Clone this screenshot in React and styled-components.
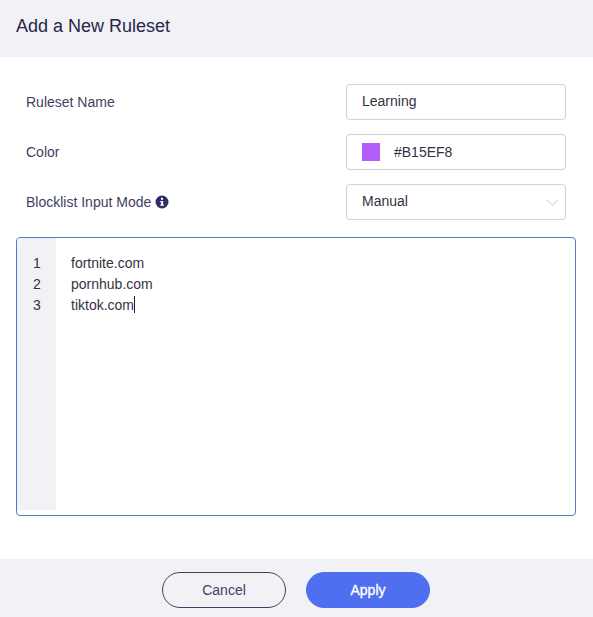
import React from "react";
import styled, { createGlobalStyle } from "styled-components";

const GlobalStyle = createGlobalStyle`
  html, body {
    margin: 0;
    padding: 0;
    background: #fff;
    font-family: "Liberation Sans", Arial, sans-serif;
  }
  * {
    box-sizing: border-box;
  }
`;

const Dialog = styled.div`
  width: 593px;
  height: 617px;
  display: flex;
  flex-direction: column;
  background: #fff;
`;

const Header = styled.header`
  height: 57px;
  flex: none;
  display: flex;
  align-items: center;
  padding: 0 16px 5px;
  background: #f1f1f6;
`;

const Title = styled.h1`
  margin: 0;
  font-size: 18px;
  font-weight: normal;
  color: #27274a;
`;

const Body = styled.main`
  flex: 1;
  padding: 26px 17px 0 16px;
`;

const Form = styled.div`
  display: flex;
  flex-direction: column;
  gap: 12px;
  padding: 0 10px;
`;

const Row = styled.div`
  display: flex;
  align-items: center;
  justify-content: space-between;
  height: 38px;
`;

const Label = styled.label`
  display: flex;
  align-items: center;
  gap: 4px;
  font-size: 14px;
  color: #3f3f63;
`;

const Field = styled.div`
  width: 220px;
  height: 36px;
  display: flex;
  align-items: center;
  gap: 14px;
  padding: 0 15px ${({ $swatch }) => ($swatch ? "1px" : "3px")};
  border: 1px solid #d0d0d6;
  border-radius: 4px;
  background: #fff;
  font-size: 14px;
  color: #33333f;
`;

const Swatch = styled.span`
  width: 18px;
  height: 18px;
  flex: none;
  margin-top: 1px;
  background: ${({ $color }) => $color};
`;

const Chevron = styled.svg`
  margin: 4px -9px 0 auto;
`;

const Editor = styled.div`
  height: 279px;
  margin-top: 16px;
  display: flex;
  padding-bottom: 5px;
  border: 1px solid #5c74c4;
  border-radius: 4px;
  background: #fff;
  overflow: hidden;
  font-size: 14px;
  line-height: 21px;
  color: #33333f;
`;

const Gutter = styled.div`
  width: 39px;
  flex: none;
  padding: 15px 0 0 16px;
  background: #f1f1f6;
`;

const Lines = styled.div`
  padding: 15px 0 0 15px;
`;

const Caret = styled.span`
  display: inline-block;
  width: 1px;
  height: 17px;
  vertical-align: -3px;
  background: #222;
`;

const Footer = styled.footer`
  height: 58px;
  flex: none;
  display: flex;
  justify-content: center;
  align-items: center;
  gap: 20px;
  padding: 4px 1px 0 0;
  background: #f1f1f6;
`;

const Button = styled.button`
  width: 124px;
  height: 36px;
  padding: 0;
  border-radius: 18px;
  border: 1px solid ${({ $primary }) => ($primary ? "#4f6ff0" : "#3f3f63")};
  background: ${({ $primary }) => ($primary ? "#4f6ff0" : "transparent")};
  color: ${({ $primary }) => ($primary ? "#fff" : "#3f3f63")};
  font-family: inherit;
  font-size: 14px;
  -webkit-text-stroke: ${({ $primary }) => ($primary ? "0.35px #fff" : "0")};
`;

const InfoIcon = () => (
  <svg width="14" height="14" viewBox="0 0 14 14" aria-hidden="true">
    <circle cx="7" cy="7" r="6.5" fill="#2f2f66" />
    <rect x="6" y="2.8" width="2" height="2" fill="#fff" />
    <path d="M5.3 6h2.8v3.6h.8v1.2H5.3V9.600h.9V7.200h-.9z" fill="#fff" />
  </svg>
);

const App = () => (
  <Dialog>
    <GlobalStyle />
    <Header>
      <Title>Add a New Ruleset</Title>
    </Header>
    <Body>
      <Form>
        <Row>
          <Label>Ruleset Name</Label>
          <Field>Learning</Field>
        </Row>
        <Row>
          <Label>Color</Label>
          <Field $swatch>
            <Swatch $color="#b15ef8" />
            #B15EF8
          </Field>
        </Row>
        <Row>
          <Label>
            Blocklist Input Mode
            <InfoIcon />
          </Label>
          <Field>
            Manual
            <Chevron width="13" height="7" viewBox="0 0 13 7" fill="none" stroke="#c4c4cc" strokeWidth="1">
              <path d="M1 1l5.500 5 5.500-5" />
            </Chevron>
          </Field>
        </Row>
      </Form>
      <Editor>
        <Gutter>
          <div>1</div>
          <div>2</div>
          <div>3</div>
        </Gutter>
        <Lines>
          <div>fortnite.com</div>
          <div>pornhub.com</div>
          <div>
            tiktok.com
            <Caret />
          </div>
        </Lines>
      </Editor>
    </Body>
    <Footer>
      <Button>Cancel</Button>
      <Button $primary>Apply</Button>
    </Footer>
  </Dialog>
);

export default App;
